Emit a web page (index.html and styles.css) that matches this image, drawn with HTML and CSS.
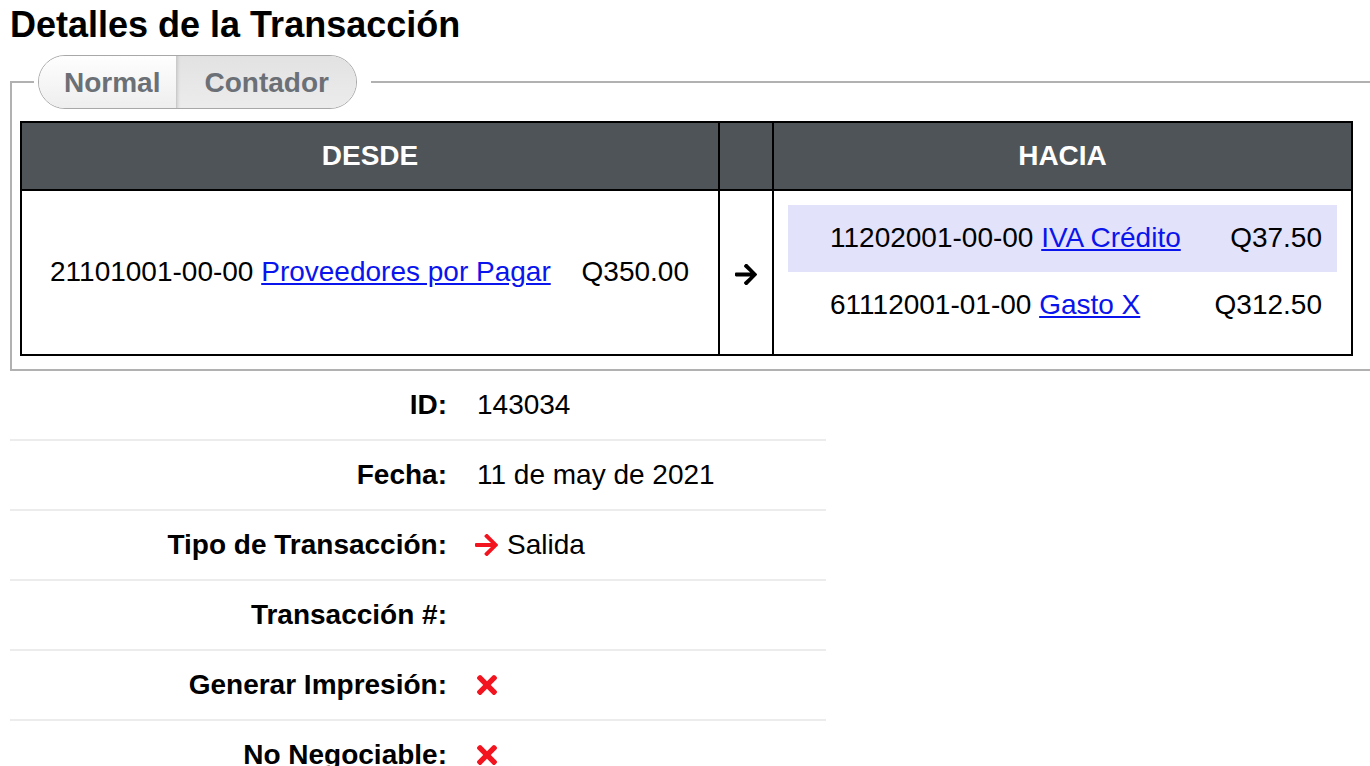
FILE: index.html
```html
<!DOCTYPE html>
<html lang="es">
<head>
<meta charset="utf-8">
<title>Detalles de la Transacción</title>
<link rel="stylesheet" href="styles.css">
</head>
<body>
  <h1 class="title">Detalles de la Transacción</h1>

  <fieldset class="panel">
    <legend class="panel-legend">
      <div class="tabs">
        <button class="tab tab--first" type="button">Normal</button>
        <button class="tab tab--last tab--active" type="button">Contador</button>
      </div>
    </legend>

    <table class="ledger">
      <colgroup>
        <col class="col-from">
        <col class="col-flow">
        <col class="col-to">
      </colgroup>
      <thead>
        <tr>
          <th>DESDE</th>
          <th></th>
          <th>HACIA</th>
        </tr>
      </thead>
      <tbody>
        <tr>
          <td class="side">
            <table class="entries">
              <tr>
                <td class="acct">21101001-00-00 <a href="#">Proveedores por Pagar</a></td>
                <td class="amt">Q350.00</td>
              </tr>
            </table>
          </td>
          <td class="flow">
            <svg class="icon-arrow" viewBox="0 44 448 424" aria-hidden="true"><path d="M190.5 66.9l22.2-22.2c9.4-9.4 24.6-9.4 33.9 0L441 239c9.4 9.4 9.4 24.6 0 33.9L246.6 467.3c-9.4 9.4-24.6 9.4-33.9 0l-22.2-22.2c-9.5-9.5-9.3-25 .4-34.3L311.4 296H24c-13.3 0-24-10.7-24-24v-32c0-13.3 10.7-24 24-24h287.4L190.9 101.2c-9.8-9.3-10-24.8-.4-34.3z"/></svg>
          </td>
          <td class="side">
            <table class="entries entries--to">
              <tr class="is-highlighted">
                <td class="acct">11202001-00-00 <a href="#">IVA Crédito</a></td>
                <td class="amt">Q37.50</td>
              </tr>
              <tr>
                <td class="acct">61112001-01-00 <a href="#">Gasto X</a></td>
                <td class="amt">Q312.50</td>
              </tr>
            </table>
          </td>
        </tr>
      </tbody>
    </table>
  </fieldset>

  <dl class="details">
    <div class="detail">
      <dt>ID:</dt>
      <dd>143034</dd>
    </div>
    <div class="detail">
      <dt>Fecha:</dt>
      <dd>11 de may de 2021</dd>
    </div>
    <div class="detail">
      <dt>Tipo de Transacción:</dt>
      <dd class="type"><svg class="icon-arrow icon-arrow--out" viewBox="0 44 448 424" aria-hidden="true"><path d="M190.5 66.9l22.2-22.2c9.4-9.4 24.6-9.4 33.9 0L441 239c9.4 9.4 9.4 24.6 0 33.9L246.6 467.3c-9.4 9.4-24.6 9.4-33.9 0l-22.2-22.2c-9.5-9.5-9.3-25 .4-34.3L311.4 296H24c-13.3 0-24-10.7-24-24v-32c0-13.3 10.7-24 24-24h287.4L190.9 101.2c-9.8-9.3-10-24.8-.4-34.3z"/></svg>Salida</dd>
    </div>
    <div class="detail">
      <dt>Transacción #:</dt>
      <dd></dd>
    </div>
    <div class="detail">
      <dt>Generar Impresión:</dt>
      <dd><svg class="icon-no" viewBox="0 80 352 352" aria-hidden="true"><path d="M242.72 256l100.07-100.07c12.28-12.28 12.28-32.19 0-44.48l-22.24-22.24c-12.28-12.28-32.19-12.28-44.48 0L176 189.28 75.93 89.21c-12.28-12.28-32.19-12.28-44.48 0L9.21 111.45c-12.28 12.28-12.28 32.19 0 44.48L109.28 256 9.21 356.07c-12.28 12.28-12.28 32.19 0 44.48l22.24 22.24c12.28 12.28 32.2 12.28 44.48 0L176 322.72l100.07 100.07c12.28 12.28 32.2 12.28 44.48 0l22.24-22.24c12.28-12.28 12.28-32.19 0-44.48L242.72 256z"/></svg></dd>
    </div>
    <div class="detail">
      <dt>No Negociable:</dt>
      <dd><svg class="icon-no" viewBox="0 80 352 352" aria-hidden="true"><path d="M242.72 256l100.07-100.07c12.28-12.28 12.28-32.19 0-44.48l-22.24-22.24c-12.28-12.28-32.19-12.28-44.48 0L176 189.28 75.93 89.21c-12.28-12.28-32.19-12.28-44.48 0L9.21 111.45c-12.28 12.28-12.28 32.19 0 44.48L109.28 256 9.21 356.07c-12.28 12.28-12.28 32.19 0 44.48l22.24 22.24c12.28 12.28 32.2 12.28 44.48 0L176 322.72l100.07 100.07c12.28 12.28 32.2 12.28 44.48 0l22.24-22.24c12.28-12.28 12.28-32.19 0-44.48L242.72 256z"/></svg></dd>
    </div>
  </dl>
</body>
</html>
```

FILE: styles.css
```css
html {
  overflow: hidden;
}

body {
  margin: 0;
  padding: 0 10px;
  font-family: "Liberation Sans", Arial, sans-serif;
  font-size: 28px;
  line-height: 32px;
  color: #000;
  background: #fff;
}

a {
  color: #0a14ec;
  text-decoration: underline;
}

.title {
  margin: 4px 0 0;
  font-size: 36px;
  line-height: 42px;
  font-weight: bold;
}

/* Panel holding the view switcher and the ledger */
.panel {
  margin: 9px -40px 0 0;
  padding: 12px 8px 13px;
  border: 2px solid #b1b1b1;
  min-width: 0;
}

.panel-legend {
  margin-left: 14px;
  padding: 0 14px 0 4px;
}

.tabs {
  display: flex;
  height: 54px;
  box-sizing: border-box;
  border: 1.5px solid #a8a8a8;
  border-radius: 27px;
  overflow: hidden;
}

.tab {
  margin: 0;
  border: 0;
  font-family: "Liberation Sans", Arial, sans-serif;
  font-size: 28px;
  font-weight: bold;
  color: #6b7076;
  display: flex;
  align-items: center;
  padding-top: 2px;
  cursor: pointer;
}

.tab--first {
  padding-right: 16px;
  padding-left: 25px;
  background: linear-gradient(#fefefe, #eeeeee);
  border-right: 1px solid #cbcbcb;
}

.tab--last {
  padding-right: 27px;
  padding-left: 27px;
}

.tab--active {
  background: linear-gradient(#e2e2e2, #ececec);
  box-shadow: inset 3px 0 3px -2px rgba(0, 0, 0, 0.12);
}

/* From / to ledger */
.ledger {
  width: 1333px;
  table-layout: fixed;
  border-collapse: separate;
  border-spacing: 0;
  border: 2px solid #000;
}

.col-from { width: 698px; }
.col-flow { width: 54px; }
.col-to { width: 577px; }

.ledger th {
  padding: 17px 0;
  background: #4f5458;
  color: #fff;
  font-weight: bold;
  text-align: center;
  border-bottom: 2px solid #000;
  border-right: 2px solid #000;
}

.ledger th:last-child {
  border-right: 0;
}

.side {
  padding: 14px 14px 15px;
  vertical-align: middle;
  border-right: 2px solid #000;
}

.side:last-child {
  border-right: 0;
}

.flow {
  padding: 0;
  text-align: center;
  vertical-align: middle;
  border-right: 2px solid #000;
}

.icon-arrow {
  display: inline-block;
  width: 22px;
  height: 21px;
  fill: #000;
  vertical-align: middle;
}

.entries {
  width: 100%;
  border-collapse: collapse;
}

.entries td {
  padding: 17px 0 18px;
}

.entries .acct {
  padding-left: 14px;
  text-align: left;
  white-space: nowrap;
}

.entries .amt {
  width: 1%;
  padding-right: 15px;
  padding-left: 20px;
  text-align: right;
  white-space: nowrap;
}

.entries--to .acct {
  padding-left: 42px;
}

.entries .is-highlighted {
  background: #e2e2fa;
}

/* Detail list below the ledger */
.details {
  width: 816px;
  margin: 0;
}

.detail {
  display: grid;
  grid-template-columns: 452px 1fr;
  align-items: center;
  height: 70px;
  box-sizing: border-box;
  border-bottom: 2px solid #ececec;
}

.detail dt {
  padding-right: 15px;
  text-align: right;
  font-weight: bold;
}

.detail dd {
  margin: 0;
  padding-left: 15px;
  display: flex;
  align-items: center;
}

.icon-arrow--out {
  width: 23px;
  height: 22px;
  margin-left: -2px;
  margin-right: 9px;
  fill: #f2141f;
}

.icon-no {
  width: 20px;
  height: 20px;
  fill: #f2141f;
}
```
